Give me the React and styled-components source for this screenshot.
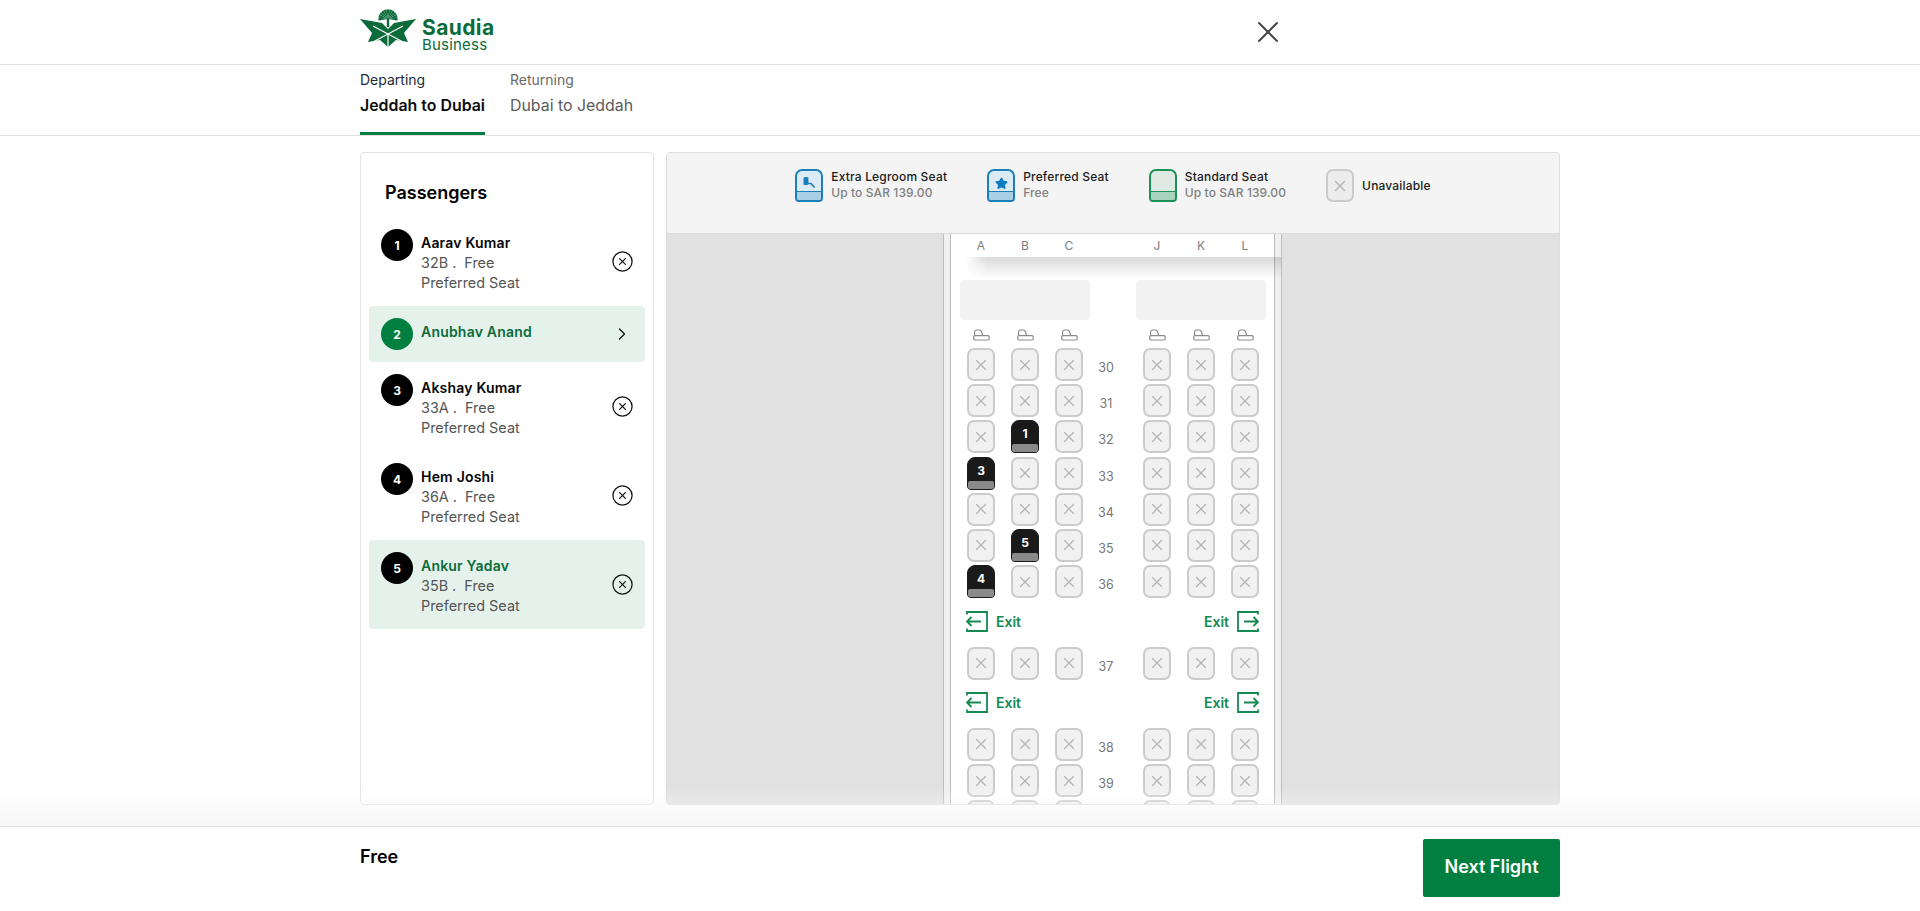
import React from 'react';
import styled, { createGlobalStyle } from 'styled-components';
import { X, ChevronRight, CircleX, Star } from 'lucide-react';

const GlobalStyle = createGlobalStyle`
  html, body {
    margin: 0;
    height: 100%;
    background: #fff;
    font-family: Inter, "Liberation Sans", sans-serif;
    color: #000;
  }
  * { box-sizing: border-box; }
`;

const GREEN = '#007f40';

const Page = styled.div`
  height: 911px;
  display: flex;
  flex-direction: column;
  overflow: hidden;
`;

const Header = styled.header`
  height: 65px;
  flex: none;
  border-bottom: 1px solid #e2e2e2;
`;

const HeaderInner = styled.div`
  width: 926px;
  height: 64px;
  margin-left: 360px;
  display: flex;
  align-items: center;
  justify-content: space-between;
`;

const Logo = styled.div`
  display: flex;
  align-items: flex-start;
  gap: 5px;
  height: 64px;
  padding-top: 9px;
  color: #0b6b3a;
`;

const LogoText = styled.div`
  display: flex;
  flex-direction: column;
  padding-top: 9px;
`;

const LogoName = styled.span`
  font-size: 21px;
  line-height: 20px;
  font-weight: 700;
  letter-spacing: 0.4px;
`;

const LogoSub = styled.span`
  font-size: 15px;
  line-height: 14px;
  font-weight: 400;
  letter-spacing: 0.2px;
`;

const CloseButton = styled.button`
  border: 0;
  padding: 0;
  background: none;
  width: 36px;
  height: 36px;
  color: #444;
`;

const TabBar = styled.nav`
  height: 71px;
  flex: none;
  padding-left: 360px;
  display: flex;
  gap: 25px;
  border-bottom: 1px solid #e2e2e2;
`;

const Tab = styled.div`
  height: 70px;
  padding-top: 6px;
  border-bottom: 3px solid ${p => (p.$active ? GREEN : 'transparent')};
  margin-bottom: -1px;
  color: ${p => (p.$active ? '#0b0b0b' : '#5b5b5b')};
`;

const TabLabel = styled.div`
  font-size: 14px;
  line-height: 18px;
  color: ${p => (p.$active ? '#1c2b3a' : '#6a6a6a')};
`;

const TabRoute = styled.div`
  margin-top: 7px;
  font-size: 15.9px;
  line-height: 20px;
  font-weight: ${p => (p.$active ? 600 : 400)};
  white-space: nowrap;
`;

const Main = styled.main`
  flex: 1;
  min-height: 0;
  padding: 16px 360px 21px;
  display: flex;
  gap: 12px;
`;

const PassengerPanel = styled.aside`
  width: 294px;
  flex: none;
  border: 1px solid #e3e3e3;
  border-radius: 4px;
  padding: 0 8px;
`;

const PanelTitle = styled.h2`
  margin: 25px 0 0 16px;
  height: 39px;
  font-size: 18px;
  line-height: 29px;
  font-weight: 600;
`;

const PassengerRow = styled.div`
  display: flex;
  gap: 8px;
  padding: 12px 12px;
  border-radius: 4px;
  background: ${p => (p.$highlight ? '#e5f2eb' : 'transparent')};
  min-height: ${p => (p.$compact ? 56 : 89)}px;
`;

const Badge = styled.div`
  width: 32px;
  height: 32px;
  flex: none;
  border-radius: 50%;
  background: ${p => (p.$green ? GREEN : '#000')};
  color: #fff;
  font-size: 12px;
  font-weight: 700;
  display: flex;
  align-items: center;
  justify-content: center;
`;

const PassengerText = styled.div`
  flex: 1;
  padding-top: 4px;
  font-size: 14.4px;
  line-height: 20px;
  color: #555;
`;

const PassengerName = styled.div`
  font-weight: 600;
  font-size: 14px;
  letter-spacing: 0.2px;
  color: ${p => (p.$green ? '#0b6b3a' : '#050505')};
`;

const SeatFare = styled.div`
  white-space: pre;
`;

const RowAction = styled.div`
  width: 24px;
  flex: none;
  display: flex;
  align-items: center;
  justify-content: center;
  margin-right: -1px;
  color: #111;
`;

const MapPanel = styled.section`
  flex: 1;
  min-width: 0;
  border: 1px solid #dedede;
  border-radius: 4px;
  background: #e1e1e1;
  overflow: hidden;
  display: flex;
  flex-direction: column;
`;

const Legend = styled.div`
  height: 81px;
  flex: none;
  background: #f4f4f4;
  border-bottom: 1px solid #dcdcdc;
  padding-top: 16px;
  display: flex;
  justify-content: center;
  gap: 40px;
`;

const LegendItem = styled.div`
  display: flex;
  gap: 8px;
  align-items: ${p => (p.$center ? 'center' : 'flex-start')};
  height: 33px;
`;

const LegendText = styled.div`
  font-size: 12px;
  line-height: 16px;
  font-weight: 500;
  color: #1b1b1b;
  letter-spacing: 0.18px;
  white-space: nowrap;
`;

const LegendSub = styled.div`
  color: #808080;
  font-weight: 500;
  letter-spacing: 0.1px;
`;

const COLORS = {
  blue: { border: '#1a7fba', bg: '#dceaf3', strip: '#a9cfe6' },
  green: { border: '#1f9158', bg: '#dfeae4', strip: '#a8d4bc' },
};

const LegendSeat = styled.div`
  position: relative;
  width: 28px;
  height: 33px;
  border: 2px solid ${p => COLORS[p.$tone].border};
  border-radius: 7px 7px 4px 4px;
  background: ${p => COLORS[p.$tone].bg};
  overflow: hidden;
  display: flex;
  justify-content: center;
  align-items: flex-start;
  padding-top: 6px;
  color: ${p => COLORS[p.$tone].border};

  &::after {
    content: '';
    position: absolute;
    left: 0;
    right: 0;
    bottom: 0;
    height: 8px;
    background: ${p => COLORS[p.$tone].strip};
    border-top: 1px solid ${p => COLORS[p.$tone].border};
  }
`;

const Fuselage = styled.div`
  width: 339px;
  flex: 1;
  min-height: 0;
  margin-left: 276px;
  padding: 0 6px;
  background: #f0f0f0;
  border-left: 1px solid #bcbcbc;
  border-right: 1px solid #bcbcbc;
`;

const Cabin = styled.div`
  height: 100%;
  background: #fff;
  border-left: 1px solid #bcbcbc;
  border-right: 1px solid #bcbcbc;
`;

const COLUMNS = '44px 44px 44px 44px 44px 44px 44px';

const ColumnHeader = styled.div`
  position: relative;
  height: 23px;
  padding: 0 0 1px 8px;
  display: grid;
  grid-template-columns: ${COLUMNS};
  align-items: center;
  text-align: center;
  font-size: 12px;
  color: #7c7c7c;

  &::after {
    content: '';
    position: absolute;
    left: 14px;
    right: -7px;
    top: 100%;
    height: 22px;
    background: linear-gradient(rgba(0, 0, 0, 0.15), rgba(0, 0, 0, 0.07) 50%, rgba(0, 0, 0, 0));
    mask-image: linear-gradient(90deg, transparent, #000 22px);
  }
`;

const Lavatories = styled.div`
  display: flex;
  gap: 46px;
  padding: 23px 0 0 9px;
`;

const Lavatory = styled.div`
  width: 130px;
  height: 40px;
  border-radius: 4px;
  background: #f2f2f2;
`;

const SeatGlyphRow = styled.div`
  height: 28px;
  padding: 9px 0 0 8px;
  display: grid;
  grid-template-columns: ${COLUMNS};
  justify-items: center;
  align-items: start;
`;

const SeatRow = styled.div`
  padding-left: 8px;
  margin-bottom: 3.2px;
  display: grid;
  grid-template-columns: ${COLUMNS};
  justify-items: center;
`;

const RowNumber = styled.div`
  padding: 12px 14px 0 0;
  width: 100%;
  text-align: center;
  font-size: 12.5px;
  line-height: 16px;
  color: #777;
`;

const Seat = styled.div`
  position: relative;
  width: 28px;
  height: 33px;
  border: ${p => (p.$taken ? '1px solid #1a1a1a' : '2px solid #cbcbcb')};
  border-radius: ${p => (p.$taken ? '8px 8px 4px 4px' : '7px')};
  background: ${p => (p.$taken ? '#1a1a1a' : '#f1f1f1')};
  color: ${p => (p.$taken ? '#fff' : '#b4b4b4')};
  display: flex;
  justify-content: center;
  align-items: center;
  font-size: 12px;
  font-weight: 700;
  padding-bottom: ${p => (p.$taken ? 6 : 0)}px;
`;

const SeatStrip = styled.span`
  position: absolute;
  left: 0;
  right: 0;
  bottom: 0;
  height: 8px;
  border-radius: 2px;
  background: #8a8a8a;
`;

const UnavailableSeat = styled(Seat)`
  flex: none;
  background: #ececec;
`;

/* the margin above collapses with the seat row's margin-bottom */
const ExitRow = styled.div`
  height: 21px;
  margin: 12.6px 0 14.8px;
  padding: 0 15px;
  display: flex;
  justify-content: space-between;
`;

const ExitSign = styled.div`
  display: flex;
  align-items: center;
  gap: 8px;
  color: #148a52;
  font-size: 14px;
  font-weight: 600;
`;

const Footer = styled.footer`
  position: relative;
  height: 85px;
  flex: none;
  padding: 12px 360px 0;
  background: #fff;
  border-top: 1px solid #e0e0e0;
  display: flex;
  justify-content: space-between;
  align-items: flex-start;

  &::before {
    content: '';
    position: absolute;
    left: 0;
    right: 0;
    bottom: 100%;
    margin-bottom: 1px;
    height: 38px;
    background: linear-gradient(rgba(247, 247, 247, 0), rgba(247, 247, 247, 0.9));
    pointer-events: none;
  }
`;

const Total = styled.div`
  font-size: 18px;
  line-height: 22px;
  font-weight: 600;
  padding-top: 7px;
`;

const NextButton = styled.button`
  width: 137px;
  height: 58px;
  border: 0;
  border-radius: 2px;
  padding: 0 0 3px;
  background: ${GREEN};
  color: #fff;
  font: 600 18px Inter, "Liberation Sans", sans-serif;
`;

function LogoMark() {
  const fronds = [-90, -72, -54, -36, -18, 0, 18, 36, 54, 72, 90];
  return (
    <svg width="57" height="38" viewBox="0 0 57 38" fill="currentColor">
      {fronds.map(a => (
        <path key={a} d="M28 10 L26.6 0.6 Q28 0 29.4 0.6 Z" transform={`rotate(${a} 28 10)`} />
      ))}
      <path d="M26.8 9h2.4v9h-2.4z" />
      <path d="M0 10 L22 14 L28 20 L34 14 L56 10 L44 24 L48 33 L36 31 L28 38 L20 31 L8 33 L12 24 Z" />
      <path d="M13 17 L28 25 L43 33 M43 17 L28 25 L13 33 M28 25 V38" fill="none" stroke="#fff" strokeWidth="1.2" />
    </svg>
  );
}

function LegroomGlyph() {
  return (
    <svg width="13" height="13" viewBox="0 0 13 13" fill="none" stroke="currentColor">
      <path d="M1 1h3.5v5.5H8l3.5 4" strokeWidth="1.7" />
      <path d="M1 1h3.6v6.5H1z" fill="currentColor" strokeWidth="1" />
    </svg>
  );
}

function SeatGlyph() {
  return (
    <svg width="17" height="12" viewBox="0 0 17 12" fill="none" stroke="#8c8c8c" strokeWidth="1.2">
      <path d="M1.6 7V3.2Q1.6 1 3.8 1H6Q8 1 8.6 3L9.6 6.4" />
      <rect x="0.8" y="6.6" width="15.4" height="4.4" rx="1.2" />
    </svg>
  );
}

function ExitIcon({ flip }) {
  return (
    <svg width="22" height="21" viewBox="0 0 22 21" fill="none" stroke="#148a52" strokeWidth="1.8">
      {flip ? (
        <>
          <path d="M21 3.5V1H1v19h20v-2.5" />
          <path d="M7 10.5h14M16.5 6l4.5 4.5L16.5 15" />
        </>
      ) : (
        <>
          <path d="M1 3.5V1h20v19H1v-2.5" />
          <path d="M15 10.5H1M5.5 6L1 10.5 5.5 15" />
        </>
      )}
    </svg>
  );
}

const PASSENGERS = [
  { n: 1, name: 'Aarav Kumar', seat: '32B' },
  { n: 2, name: 'Anubhav Anand', current: true },
  { n: 3, name: 'Akshay Kumar', seat: '33A' },
  { n: 4, name: 'Hem Joshi', seat: '36A' },
  { n: 5, name: 'Ankur Yadav', seat: '35B', highlight: true },
];

const TAKEN = { '32B': 1, '33A': 3, '35B': 5, '36A': 4 };

function Row({ number, label = number }) {
  const cell = col => {
    const who = TAKEN[`${number}${col}`];
    if (who) {
      return (
        <Seat key={col} $taken>
          {who}
          <SeatStrip />
        </Seat>
      );
    }
    return (
      <Seat key={col}>
        <X size={18} strokeWidth={1.6} />
      </Seat>
    );
  };
  return (
    <SeatRow>
      {['A', 'B', 'C'].map(cell)}
      <RowNumber>{label}</RowNumber>
      {['J', 'K', 'L'].map(cell)}
    </SeatRow>
  );
}

function Exits() {
  return (
    <ExitRow>
      <ExitSign>
        <ExitIcon />
        Exit
      </ExitSign>
      <ExitSign>
        Exit
        <ExitIcon flip />
      </ExitSign>
    </ExitRow>
  );
}

export default function App() {
  return (
    <Page>
      <GlobalStyle />
      <Header>
        <HeaderInner>
          <Logo>
            <LogoMark />
            <LogoText>
              <LogoName>Saudia</LogoName>
              <LogoSub>Business</LogoSub>
            </LogoText>
          </Logo>
          <CloseButton aria-label="Close">
            <X size={36} strokeWidth={1.3} />
          </CloseButton>
        </HeaderInner>
      </Header>

      <TabBar>
        <Tab $active>
          <TabLabel $active>Departing</TabLabel>
          <TabRoute $active>Jeddah to Dubai</TabRoute>
        </Tab>
        <Tab>
          <TabLabel>Returning</TabLabel>
          <TabRoute>Dubai to Jeddah</TabRoute>
        </Tab>
      </TabBar>

      <Main>
        <PassengerPanel>
          <PanelTitle>Passengers</PanelTitle>
          {PASSENGERS.map(p => (
            <PassengerRow key={p.n} $highlight={p.current || p.highlight} $compact={p.current}>
              <Badge $green={p.current}>{p.n}</Badge>
              <PassengerText>
                <PassengerName $green={p.current || p.highlight}>{p.name}</PassengerName>
                {p.seat && <SeatFare>{`${p.seat} .  Free`}</SeatFare>}
                {p.seat && <div>Preferred Seat</div>}
              </PassengerText>
              <RowAction>
                {p.current ? <ChevronRight size={20} strokeWidth={1.5} /> : <CircleX size={23} strokeWidth={1.3} />}
              </RowAction>
            </PassengerRow>
          ))}
        </PassengerPanel>

        <MapPanel>
          <Legend>
            <LegendItem>
              <LegendSeat $tone="blue">
                <LegroomGlyph />
              </LegendSeat>
              <LegendText>
                Extra Legroom Seat
                <LegendSub>Up to SAR 139.00</LegendSub>
              </LegendText>
            </LegendItem>
            <LegendItem>
              <LegendSeat $tone="blue">
                <Star size={13} fill="#0b7cc0" stroke="#0b7cc0" />
              </LegendSeat>
              <LegendText>
                Preferred Seat
                <LegendSub>Free</LegendSub>
              </LegendText>
            </LegendItem>
            <LegendItem>
              <LegendSeat $tone="green" />
              <LegendText>
                Standard Seat
                <LegendSub>Up to SAR 139.00</LegendSub>
              </LegendText>
            </LegendItem>
            <LegendItem $center>
              <UnavailableSeat>
                <X size={18} strokeWidth={1.6} />
              </UnavailableSeat>
              <LegendText>Unavailable</LegendText>
            </LegendItem>
          </Legend>

          <Fuselage>
            <Cabin>
              <ColumnHeader>
                <span>A</span>
                <span>B</span>
                <span>C</span>
                <span />
                <span>J</span>
                <span>K</span>
                <span>L</span>
              </ColumnHeader>
              <Lavatories>
                <Lavatory />
                <Lavatory />
              </Lavatories>
              <SeatGlyphRow>
                <SeatGlyph />
                <SeatGlyph />
                <SeatGlyph />
                <span />
                <SeatGlyph />
                <SeatGlyph />
                <SeatGlyph />
              </SeatGlyphRow>
              {[30, 31, 32, 33, 34, 35, 36].map(n => (
                <Row key={n} number={n} />
              ))}
              <Exits />
              <Row number={37} />
              <Exits />
              <Row number={38} />
              <Row number={39} />
              {/* only the tops of this row show above the panel edge */}
              <Row number={40} label="" />
            </Cabin>
          </Fuselage>
        </MapPanel>
      </Main>

      <Footer>
        <Total>Free</Total>
        <NextButton>Next Flight</NextButton>
      </Footer>
    </Page>
  );
}
